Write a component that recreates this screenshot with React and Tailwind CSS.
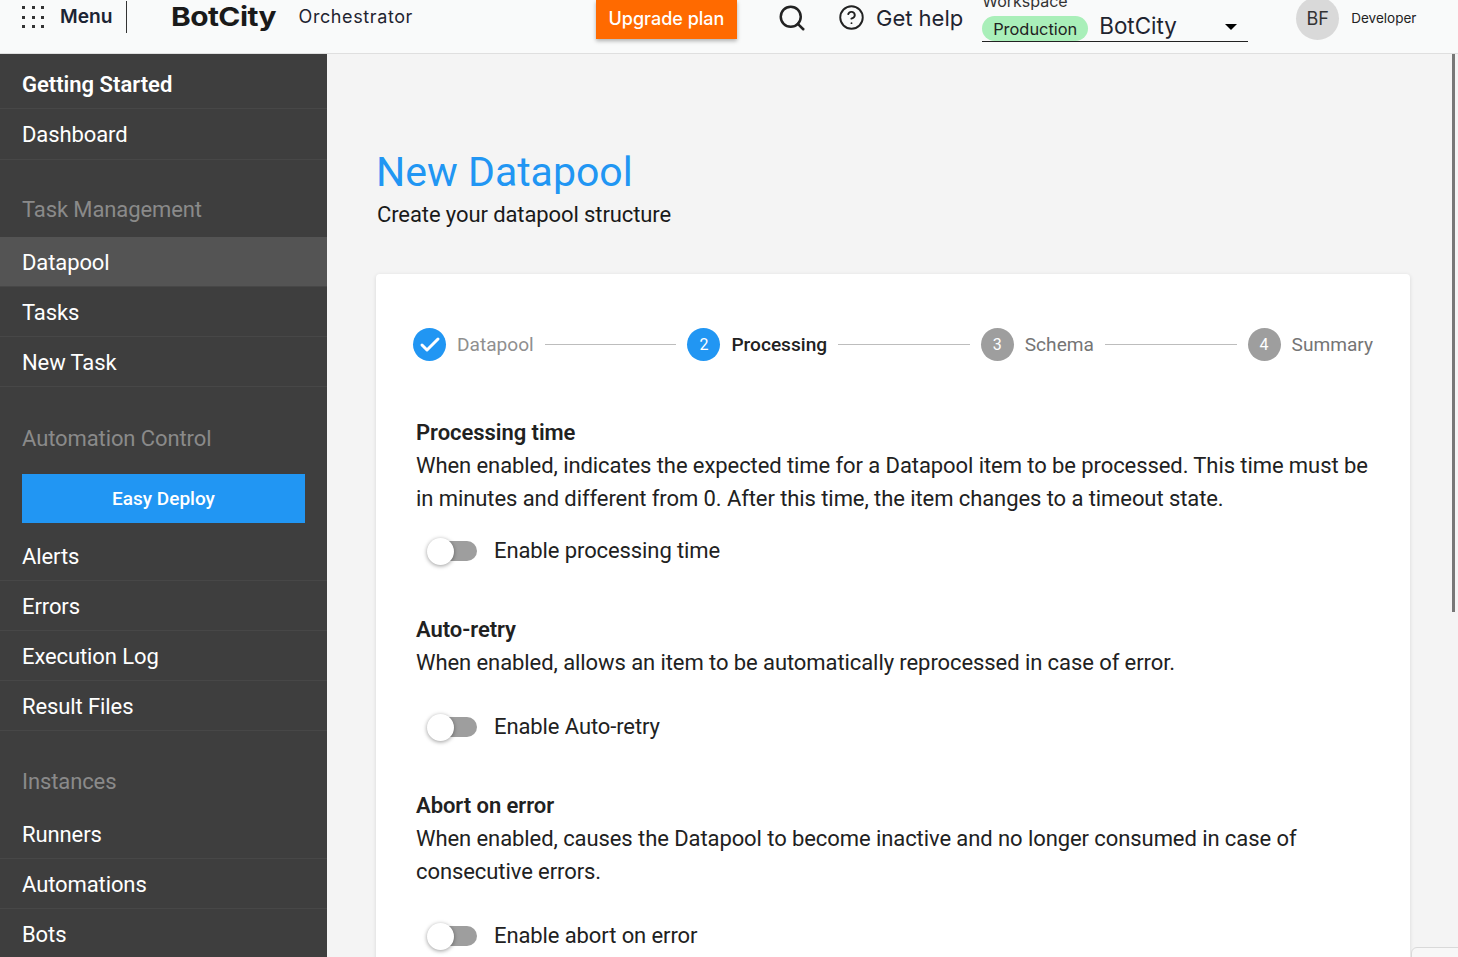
import React from 'react';
import { Search, CircleHelp, Check } from 'lucide-react';

const roboto = "font-['Roboto',sans-serif]";
const inter = "font-['Inter',sans-serif]";

const SideRow = ({ label, active, tall }) => (
  <div className={`flex shrink-0 items-center border-b border-[#474747] px-[22px] text-[22px] tracking-[-0.1px] text-white ${tall ? 'h-[51px]' : 'h-[50px] pt-[2px]'} ${active ? 'bg-[#545454]' : ''}`}>
    {label}
  </div>
);

const SideHeader = ({ label, className }) => (
  <div className={`flex shrink-0 items-end px-[22px] text-[22px] tracking-[-0.1px] text-[#8a8a8a] ${className}`}>{label}</div>
);

const Step = ({ n, label, state, grow }) => (
  <>
    <div className={`flex h-[33px] w-[33px] shrink-0 items-center justify-center rounded-full text-[16px] text-white ${state === 'todo' ? 'bg-[#9e9e9e]' : 'bg-[#2196f3]'}`}>
      {state === 'done' ? <Check size={24} strokeWidth={3} /> : n}
    </div>
    <span className={`ml-[11px] whitespace-nowrap pt-[2px] text-[19.1px] ${state === 'current' ? 'font-medium text-[#212121]' : state === 'todo' ? 'text-[#757575]' : 'text-[#8f8f8f]'}`}>
      {label}
    </span>
    {grow && <div className="mx-[11px] h-px flex-1 bg-[#bdbdbd]" />}
  </>
);

const Toggle = ({ label }) => (
  <div className="flex items-center pl-[11px]">
    <div className="relative h-[20px] w-[51px]">
      <div className="absolute left-[8px] top-0 h-[20px] w-[42px] rounded-full bg-[#9e9e9e]" />
      <div className="absolute left-0 top-[-3px] h-[27px] w-[27px] rounded-full bg-white shadow-[0_1px_4px_rgba(0,0,0,0.4)]" />
    </div>
    <span className="ml-[16px] text-[22px] tracking-[-0.1px] text-[#212121]">{label}</span>
  </div>
);

const Section = ({ title, children, toggle, className, toggleClass }) => (
  <div className={className}>
    <h3 className="text-[22px] font-semibold leading-[33px] tracking-[-0.05px] text-[#212121]">{title}</h3>
    <p className="text-[22px] leading-[33px] tracking-[-0.08px] text-[#212121]">{children}</p>
    <div className={toggleClass}>
      <Toggle label={toggle} />
    </div>
  </div>
);

export default function App() {
  return (
    <div className={`relative flex h-[957px] w-[1458px] flex-col overflow-hidden bg-[#f4f4f4] ${roboto}`}>
      {/* top bar */}
      <header className={`flex h-[54px] shrink-0 items-start border-b border-[#dfdfdf] bg-[#f9fafa] ${inter}`}>
        <div className="ml-[22px] mt-[6px] grid grid-cols-3 gap-x-[6.5px] gap-y-[6.5px]">
          {Array.from({ length: 9 }).map((_, i) => (
            <span key={i} className="h-[3px] w-[3px] bg-[#333]" />
          ))}
        </div>
        <span className="ml-[16px] mt-[5px] text-[19.2px] font-semibold leading-[22px] text-[#1c2434]">Menu</span>
        <div className="ml-[13px] mt-px h-[32px] w-px bg-[#333]" />
        <span className="ml-[44px] mt-[1px] w-[128px] origin-left scale-x-[1.15] text-[26px] font-bold leading-[32px] tracking-[-0.5px] text-[#1a1a1a]">BotCity</span>
        <span className="mt-[5px] text-[18px] leading-[24px] tracking-[0.6px] text-[#1f2430]">Orchestrator</span>
        <button className="ml-[183px] h-[39px] w-[141px] bg-[#ff6a00] pb-[2px] text-[18px] font-medium text-white shadow-[0_2px_4px_rgba(0,0,0,0.3)]">
          Upgrade plan
        </button>
        <Search size={30} strokeWidth={2} className="ml-[40px] mt-[3px] text-[#222]" />
        <CircleHelp size={27} strokeWidth={1.7} className="ml-[31px] mt-[4px] text-[#222]" />
        <span className="ml-[11px] mt-[4px] text-[22px] leading-[28px] text-[#1f2430]">Get help</span>
        <div className="relative ml-[19px] h-[42px] w-[266px] border-b border-[#222]">
          <span className="absolute left-0 top-[-7px] text-[16px] leading-[16px] text-[#333]">Workspace</span>
          <span className="absolute left-0 top-[16px] flex h-[25px] w-[106px] items-center justify-center rounded-full bg-[#a9efb9] pt-[2px] text-[16.4px] text-[#222]">Production</span>
          <span className="absolute left-[117px] top-[12px] text-[22.4px] leading-[28px] text-[#1f2430]">BotCity</span>
          <span className="absolute left-[243px] top-[24px] h-0 w-0 border-x-[6.5px] border-t-[6.5px] border-x-transparent border-t-black" />
        </div>
        <div className="ml-[48px] mt-[-3px] flex h-[43px] w-[43px] items-center justify-center rounded-full bg-[#d9d9d9] text-[18px] text-[#333]">BF</div>
        <span className="ml-[12px] mt-[8px] text-[13.5px] leading-[20px] text-[#222]">Developer</span>
      </header>

      <div className="flex min-h-0 flex-1">
        {/* sidebar */}
        <aside className="flex w-[327px] shrink-0 flex-col overflow-hidden bg-[#3e3e3e]">
          <div className="flex h-[55px] shrink-0 items-center border-b border-[#474747] px-[22px] pt-[6px] text-[22px] font-semibold text-white">Getting Started</div>
          <SideRow label="Dashboard" tall />
          <SideHeader label="Task Management" className="h-[77px] pb-[11px]" />
          <SideRow label="Datapool" active />
          <SideRow label="Tasks" />
          <SideRow label="New Task" />
          <SideHeader label="Automation Control" className="h-[87px] pb-[19px]" />
          <div className="shrink-0 px-[22px] pb-[8px]">
            <button className="flex h-[49px] w-full items-center justify-center bg-[#2196f3] pt-[2px] text-[19px] font-medium text-white">Easy Deploy</button>
          </div>
          <SideRow label="Alerts" />
          <SideRow label="Errors" />
          <SideRow label="Execution Log" />
          <SideRow label="Result Files" />
          <SideHeader label="Instances" className="h-[78px] pb-[11px]" />
          <SideRow label="Runners" />
          <SideRow label="Automations" />
          <SideRow label="Bots" />
        </aside>

        {/* content */}
        <main className="min-w-0 flex-1 pl-[49px] pr-[48px] pt-[91px]">
          <h1 className="text-[41px] leading-[54px] text-[#2196f3]">New Datapool</h1>
          <p className="ml-px mt-[1px] text-[22px] leading-[29px] tracking-[-0.1px] text-[#1a1a1a]">Create your datapool structure</p>
          <div className="mt-[45px] h-[800px] rounded-[4px] bg-white px-[37px] pt-[54px] shadow-[0_1px_4px_rgba(0,0,0,0.12)]">
            <div className="flex items-center">
              <Step n={1} label="Datapool" state="done" grow />
              <Step n={2} label="Processing" state="current" grow />
              <Step n={3} label="Schema" state="todo" grow />
              <Step n={4} label="Summary" state="todo" />
            </div>
            <div className="mt-[55px] pl-[3px]">
              <Section title="Processing time" toggle="Enable processing time" toggleClass="mt-[19px]">
                When enabled, indicates the expected time for a Datapool item to be processed. This time must be in minutes and different from 0. After this time, the item changes to a timeout state.
              </Section>
              <Section title="Auto-retry" toggle="Enable Auto-retry" className="mt-[46px]" toggleClass="mt-[31px]">
                When enabled, allows an item to be automatically reprocessed in case of error.
              </Section>
              <Section title="Abort on error" toggle="Enable abort on error" className="mt-[46px]" toggleClass="mt-[31px]">
                When enabled, causes the Datapool to become inactive and no longer consumed in case of consecutive errors.
              </Section>
            </div>
          </div>
        </main>
      </div>

      {/* page scrollbar */}
      <div className="absolute left-[1452px] top-[54px] h-[558px] w-[3px] bg-[#777]" />
      {/* chat widget corner */}
      <div className="absolute left-[1411px] top-[947px] h-[20px] w-[60px] rounded-tl-[6px] border border-[#d9d9d9] bg-[#f7f7f7]" />
    </div>
  );
}
